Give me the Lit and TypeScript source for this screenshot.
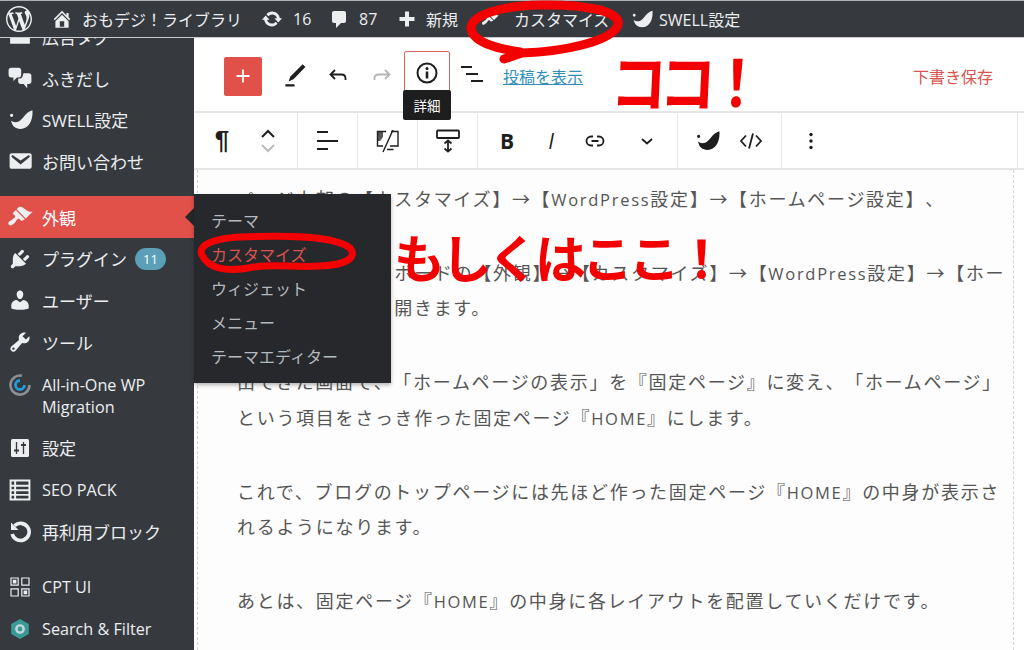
import { LitElement, html, css, svg } from "lit";
import { customElement } from "lit/decorators.js";

const P: Record<string, string> = {
  wp: "M20 10c0-5.51-4.49-10-10-10C4.48 0 0 4.49 0 10c0 5.52 4.48 10 10 10 5.51 0 10-4.48 10-10zM7.78 15.37L4.37 6.22c.55-.02 1.17-.08 1.17-.08.5-.06.44-1.13-.06-1.11 0 0-1.45.11-2.37.11-.18 0-.37 0-.58-.01C4.12 2.69 6.87 1.11 10 1.11c2.33 0 4.45.87 6.05 2.34-.68-.11-1.65.39-1.65 1.58 0 .74.45 1.36.9 2.1.35.61.55 1.36.55 2.46 0 1.49-1.4 5-1.4 5l-3.03-8.37c.54-.02.82-.17.82-.17.5-.05.44-1.25-.06-1.22 0 0-1.44.12-2.38.12-.87 0-2.33-.12-2.33-.12-.5-.03-.56 1.2-.06 1.22l.92.08 1.26 3.41zM17.41 10c.24-.64.74-1.87.43-4.25.7 1.29 1.05 2.71 1.05 4.25 0 3.29-1.73 6.24-4.4 7.78.97-2.59 1.94-5.2 2.92-7.78zM6.1 18.09C3.12 16.65 1.11 13.53 1.11 10c0-1.3.23-2.48.72-3.59C3.25 10.3 4.67 14.2 6.1 18.09zm4.03-6.63l2.58 6.98c-.86.29-1.76.45-2.71.45-.79 0-1.57-.11-2.29-.33.81-2.38 1.62-4.74 2.42-7.1z",
  home: "M16 8.5l1.53 1.53-1.06 1.06L10 4.62l-6.47 6.47-1.06-1.06L10 2.5l4 4v-2h2v4zm-6-2.46l6 5.99V18H4v-5.97zM12 17v-5H8v5h4z",
  update: "M10.2 3.28c3.53 0 6.43 2.61 6.92 6h2.08l-3.5 4-3.5-4h2.32c-.45-1.97-2.21-3.45-4.32-3.45-1.45 0-2.73.71-3.54 1.78L4.95 5.66C6.23 4.2 8.11 3.28 10.2 3.28zm-.4 13.44c-3.52 0-6.43-2.61-6.92-6H.8l3.5-4c1.17 1.33 2.33 2.67 3.5 4H5.48c.45 1.97 2.21 3.45 4.32 3.45 1.45 0 2.73-.71 3.54-1.78l1.71 1.95c-1.28 1.46-3.15 2.38-5.25 2.38z",
  comment: "M5 2h10c1.1 0 2 .9 2 2v8c0 1.1-.9 2-2 2h-3l-5 5v-5H5c-1.1 0-2-.9-2-2V4c0-1.1.9-2 2-2z",
  plus: "M8 2.5h4v5.5h5.5v4H12v5.5H8V12H2.5V8H8z",
  brush: "M14.48 11.06L7.41 3.99l1.5-1.5c.5-.56 2.3-.47 3.51.32 1.21.8 1.43 1.28 2.91 2.1 1.18.64 2.45 1.26 4.45.85zm-.71.71L6.7 4.7 4.93 6.47c-.39.39-.39 1.02 0 1.41l1.06 1.06c.39.39.39 1.03 0 1.42-.6.6-1.43 1.11-2.21 1.69-.35.26-.7.53-1.01.84C1.43 13.23.4 14.8 1.56 15.98c1.17 1.15 2.72.12 4.05-1.21.31-.31.58-.66.84-1.01.58-.78 1.09-1.61 1.69-2.21.39-.39 1.02-.39 1.41 0l1.06 1.06c.39.39 1.02.39 1.41 0z",
  plugin: "M13.11 4.36L9.87 7.6 8 5.73l3.24-3.24c.35-.34 1.05-.2 1.56.32.52.51.66 1.21.31 1.55zm-8 1.77l.91-1.12 9.01 9.01-1.19.84c-.71.71-2.63 1.16-3.82 1.16H6.14L4.9 17.26c-.59.59-1.54.59-2.12 0-.59-.58-.59-1.53 0-2.12l1.24-1.24v-3.88c0-1.13.4-3.19 1.09-3.89zm7.26 3.97l3.24-3.24c.34-.35 1.04-.21 1.55.31.52.51.66 1.21.31 1.55l-3.24 3.25z",
  user: "M10 9.25c-2.27 0-2.73-3.44-2.73-3.44C7 4.02 7.82 2 9.97 2c2.16 0 2.98 2.02 2.71 3.81 0 0-.41 3.44-2.68 3.44zm0 2.57L12.72 10c2.39 0 4.52 2.33 4.52 4.53v2.49s-3.65 1.13-7.24 1.13c-3.65 0-7.24-1.13-7.24-1.13v-2.49c0-2.25 1.94-4.48 4.47-4.48z",
  tools: "M16.68 9.77c-1.34 1.34-3.3 1.67-4.95.99l-5.41 6.52c-.99.99-2.59.99-3.58 0s-.99-2.59 0-3.57l6.52-5.42c-.68-1.65-.35-3.61.99-4.95 1.28-1.28 3.12-1.62 4.72-1.06l-2.89 2.89 2.82 2.82 2.86-2.87c.53 1.58.18 3.39-1.08 4.65zM3.81 16.21c.4.39 1.04.39 1.43 0 .4-.4.4-1.04 0-1.43-.39-.4-1.03-.4-1.43 0-.39.39-.39 1.03 0 1.43z",
  mail: "M3.87 4h13.25C18.37 4 19 4.59 19 5.79v8.42c0 1.19-.63 1.79-1.88 1.79H3.87c-1.25 0-1.88-.6-1.88-1.79V5.79c0-1.2.63-1.79 1.88-1.79zm6.62 8.6l6.74-5.53c.24-.2.43-.66.13-1.07-.29-.41-.82-.42-1.17-.17l-5.7 3.86L4.8 5.83c-.35-.25-.88-.24-1.17.17-.3.41-.11.87.13 1.07z",
  bubbles: "M2.5 1.500h6.500C10.100 1.500 11 2.400 11 3.500v4C11 8.600 10.100 9.500 9 9.500H7.500l-3 3v-3h-2C1.400 9.500.5 8.600.5 7.500v-4C.5 2.400 1.400 1.500 2.500 1.500zM13 6h4.500c1.100 0 2 .9 2 2v5c0 1.100-.9 2-2 2H16v3.500L13 15h-2.500c-1.100 0-2-.9-2-2v-2.500H9c2.200 0 3.500-1.500 3.500-3.500z",
  swell: "M19.500 2.500c.8 7.500-2.500 15-9.500 15-4 0-6.800-2.300-7.500-6.500 1.800 1.300 4 1.500 6 .5 3.800-1.900 5.300-7.500 11-9zM2.900 5.300a1.300 1.300 0 1 1 0 2.600 1.300 1.300 0 0 1 0-2.600z",
  seo: "M2 2h16v16H2zm1.500 1.500v2.500h2V3.500zm3.500 0v2.500h9.500V3.500zm-3.500 4v2h2v-2zm3.500 0v2h9.500v-2zm-3.500 3.500v2h2v-2zm3.500 0v2h9.500v-2zm-3.500 3.500v2h2v-2zm3.500 0v2h9.500v-2z",
  cpt: "M2 2h7v7H2zm1 1v5h5V3zM11 2h7v7h-7zm1 1v5h5V3zM2 11h7v7H2zm1 1v5h5v-5zM11 11h7v7h-7zm1 1v5h5v-5zM4 4h3v3H4zM13 13h3v3h-3z",
  tag: "M1 9L19 3v3.500L6 10.500h13V17H1zM3 1h14v1.500H3z",
};

const icon = (name: string, size = 20) => html`<svg class="ic" width=${size} height=${size} viewBox="0 0 20 20" fill="currentColor" fill-rule="evenodd"><path d=${P[name]}></path></svg>`;
const mi = (inner: unknown) => html`<span class="mi">${inner}</span>`;

const stroke = (body: unknown, size = 24) => html`<svg width=${size} height=${size} viewBox="0 0 24 24" fill="none" stroke="currentColor" stroke-width="1.800">${body}</svg>`;

const reuse = html`<svg class="ic" width="24" height="24" viewBox="0 0 24 24" fill="none" stroke="currentColor" stroke-width="3.600"><path d="M6.500 6.800A8.600 8.600 0 1 1 4.200 15"></path><path d="M3 3.500v7.500h7.500" stroke="none" fill="currentColor"></path></svg>`;
const aio = html`<svg class="ic" width="22" height="22" viewBox="0 0 22 22" fill="none"><path d="M13 1.800A9.500 9.500 0 1 0 20.500 11" stroke="#8b9096" stroke-width="2.600"></path><path d="M15.500 11a4.500 4.500 0 1 1-4.500-4.500" stroke="#1f9bdc" stroke-width="2.800"></path></svg>`;
const search = html`<svg class="ic" width="22" height="22" viewBox="0 0 20 20"><path d="M10 1l8 4.500v9L10 19l-8-4.500v-9z" fill="#3a9a98"></path><circle cx="10" cy="10" r="4.400" fill="#c5d6d8"></circle><circle cx="10" cy="10" r="2.200" fill="#3a9a98"></circle></svg>`;
const sliders = html`<svg class="ic" width="20" height="20" viewBox="0 0 20 20"><rect x="1" y="1" width="18" height="18" rx="1.500" fill="currentColor"></rect><path d="M6.500 4v12M13.500 4v12" stroke="#363a3f" stroke-width="1.300"></path><path d="M4 12.500h5M11 7h5" stroke="#363a3f" stroke-width="2.200"></path></svg>`;

@customElement("app-root")
export class AppRoot extends LitElement {
  static styles = css`
    :host { display: block; width: 1024px; height: 650px; position: relative; overflow: hidden; background: #fff;
      font-family: "Open Sans", "Noto Sans CJK JP", sans-serif; color: #555; }
    .ic { flex: none; display: block; }
    .bar { height: 38px; box-sizing: border-box; border-top: 1px solid #aeb0b2; border-bottom: 1px solid #c9cacb; background: #363a3f; color: #eceeef;
      display: flex; align-items: center; font-size: 16px; position: relative; z-index: 3; white-space: nowrap; }
    .bi { display: flex; align-items: center; }
    .b-wp { margin-left: 6px; width: 45px; }
    .b-site { gap: 9px; width: 210px; }
    .b-count { gap: 10px; width: 68px; }
    .b-new { gap: 9px; width: 84px; }
    .b-cust { gap: 15px; width: 150px; }
    .b-swell { gap: 6px; }
    .body { display: flex; height: 612px; }
    aside { width: 194px; flex: none; background: #363a3f; color: #eceeef; font-size: 17px; position: relative; z-index: 2; }
    ul { list-style: none; margin: 0; padding: 0; }
    .menu { margin-top: -22.500px; }
    .menu > li { height: 41.700px; display: flex; align-items: center; gap: 12px; padding-left: 10px; position: relative; white-space: nowrap; box-sizing: border-box; }
    .mi { width: 20px; flex: none; display: flex; justify-content: center; color: #eceeef; }
    .lat { font-size: 16.200px; }
    .menu > li.gap1 { margin-top: 14px; }
    .menu > li.gap2 { margin-top: 14px; }
    .menu > li.two { height: 64px; line-height: 22px; white-space: normal; align-items: flex-start; padding-top: 11px; }
    .menu > li.active { background: #e2504a; color: #fff; }
    .badge { background: #5b9fb8; color: #fff; border-radius: 11px; font-size: 13px; padding: 2px 8px; margin-left: -4px; line-height: 18px; }
    .fly { position: absolute; left: 194px; top: -2px; width: 197px; box-sizing: border-box; padding: 10px 0 9px; background: #26282b; color: #b4b9be; box-shadow: 0 2px 4px rgba(0,0,0,.3); font-size: 16px; }
    .fly li { height: 34px; line-height: 34px; padding-left: 17px; }
    .fly li.cur { color: #d9534f; }
    .arrow { position: absolute; left: 185px; top: 12px; width: 0; height: 0; border: 9px solid transparent; border-left: 0; border-right-color: #26282b; }
    main { flex: 1; min-width: 0; display: flex; flex-direction: column; }
    .t1 { height: 75px; flex: none; box-sizing: border-box; border-bottom: 2px solid #e6e6e6; display: flex; align-items: center; padding-left: 30px; color: #1e1e1e; position: relative; }
    .add { width: 38px; height: 39px; background: #e2504a; color: #fff; border-radius: 2px; display: flex; align-items: center; justify-content: center; margin-right: 10px; margin-top: 3px; }
    .tb { width: 44px; display: flex; justify-content: center; align-items: center; }
    .tb.off { color: #b5b5b5; }
    .info { width: 46px; height: 44px; box-sizing: border-box; border: 1px solid #d9655e; border-radius: 2px; align-self: flex-start; margin-top: 13px; }
    .tip { position: absolute; left: 209px; top: 52px; width: 48px; height: 30px; background: #1e1e1e; color: #fff; font-size: 13.500px; border-radius: 2px; display: flex; align-items: center; justify-content: center; }
    .view { color: #2f8fb8; text-decoration: underline; font-size: 16px; margin-left: 9px; margin-top: 2px; white-space: nowrap; }
    .draft { color: #d9534f; font-size: 16px; margin-left: auto; margin-right: 31px; white-space: nowrap; margin-top: 2px; }
    .t2 { height: 57px; flex: none; box-sizing: border-box; border-bottom: 2px solid #e6e6e6; display: flex; color: #1e1e1e; }
    .g { display: flex; align-items: center; border-right: 1.500px solid #e6e6e6; box-sizing: border-box; height: 100%; }
    .g1 { width: 104px; padding-left: 6px; }
    .g2, .g3, .g4 { width: 60px; justify-content: center; }
    .g5 { width: 200px; padding-left: 7px; }
    .g6 { width: 104px; padding-left: 7px; }
    .g7 { width: 236px; padding-left: 17px; }
    .cell { width: 44px; display: flex; align-items: center; justify-content: center; flex: none; }
    .c-wide { margin-left: 8px; }
    .mv { flex-direction: column; gap: 6px; margin-left: 2px; }
    .mv .dn { color: #bbb; }
    .bold { font: 700 21px "Open Sans", sans-serif; }
    .ital { font: italic 400 21px "Open Sans", sans-serif; }
    .para { font: 700 26px "Liberation Sans", sans-serif; }
    .edit { flex: 1; min-height: 0; margin: 0 10px 0 3px; border-left: 1px dashed #d5d5d5; border-right: 1px dashed #d5d5d5; padding: 12px 0 0 39px; background: #fdfdfd; overflow: hidden;
      font-size: 18px; letter-spacing: 1.700px; line-height: 35.450px; white-space: nowrap; color: #555; text-spacing-trim: space-all; }
    .edit p { margin: 0 0 38.500px; }
    .en { font-size: 16.500px; }
    .ink { position: absolute; inset: 0; pointer-events: none; z-index: 5; }
    .note { position: absolute; color: #f50000; font-family: "Noto Sans CJK JP", sans-serif; font-weight: 700; white-space: nowrap; z-index: 5; pointer-events: none; }
    .n1 { left: 611px; top: 39px; font-size: 56px; line-height: 80px; letter-spacing: -7px; transform: scaleY(1.150) skewX(-3deg); }
    .n2 { left: 394px; top: 216px; font-size: 51px; line-height: 80px; letter-spacing: -4px; }
  `;

  render() {
    return html`
      <div class="bar">
        <div class="bi b-wp">${icon("wp", 26)}</div>
        <div class="bi b-site">${icon("home", 22)}<span>おもデジ！ライブラリ</span></div>
        <div class="bi b-count">${icon("update", 22)}<span>16</span></div>
        <div class="bi b-count">${icon("comment", 20)}<span>87</span></div>
        <div class="bi b-new">${icon("plus", 20)}<span>新規</span></div>
        <div class="bi b-cust">${icon("brush", 18)}<span>カスタマイズ</span></div>
        <div class="bi b-swell">${icon("swell", 22)}<span>SWELL設定</span></div>
      </div>
      <div class="body">
        <aside>
          <ul class="menu">
            <li>${mi(icon("tag", 22))}<span>広告タグ</span></li>
            <li>${mi(icon("bubbles", 24))}<span>ふきだし</span></li>
            <li>${mi(icon("swell", 25))}<span>SWELL設定</span></li>
            <li>${mi(icon("mail", 26))}<span>お問い合わせ</span></li>
            <li class="gap1 active">${mi(icon("brush", 26))}<span>外観</span>
              <div class="arrow"></div>
              <ul class="fly">
                <li>テーマ</li>
                <li class="cur">カスタマイズ</li>
                <li>ウィジェット</li>
                <li>メニュー</li>
                <li>テーマエディター</li>
              </ul>
            </li>
            <li>${mi(icon("plugin", 24))}<span>プラグイン</span><span class="badge">11</span></li>
            <li>${mi(icon("user", 24))}<span>ユーザー</span></li>
            <li>${mi(icon("tools", 24))}<span>ツール</span></li>
            <li class="two">${mi(aio)}<span class="lat">All-in-One WP<br />Migration</span></li>
            <li>${mi(sliders)}<span>設定</span></li>
            <li>${mi(icon("seo", 26))}<span class="lat">SEO PACK</span></li>
            <li>${mi(reuse)}<span>再利用ブロック</span></li>
            <li class="gap2">${mi(icon("cpt", 24))}<span class="lat">CPT UI</span></li>
            <li>${mi(search)}<span class="lat">Search &amp; Filter</span></li>
          </ul>
        </aside>
        <main>
          <div class="t1">
            <div class="add">${stroke(svg`<path d="M12 5.500v13M5.500 12h13"></path>`, 24)}</div>
            <div class="tb"><svg width="26" height="26" viewBox="0 0 24 24" fill="currentColor"><path d="M20 2l2.500 2.500L11.500 16 7 18l1.500-4.500zM4 20.500h8.500v2.200H4z"></path></svg></div>
            <div class="tb">${stroke(svg`<path d="M9 7L4.500 11.500 9 16M5 11.500h10.500c2.500 0 4 1.700 4 4V17"></path>`)}</div>
            <div class="tb off">${stroke(svg`<path d="M15 7l4.500 4.500L15 16M19 11.500H8.500c-2.500 0-4 1.700-4 4V17"></path>`)}</div>
            <div class="tb info">${stroke(svg`<circle cx="12" cy="12" r="9.500" stroke-width="2"></circle><path d="M12 10.500v7" stroke-width="2.600"></path><circle cx="12" cy="7.500" r="1.500" fill="currentColor" stroke="none"></circle>`, 24)}</div>
            <div class="tb">${stroke(svg`<path d="M1 4h11M6 11h12M11 18h12"></path>`)}</div>
            <a class="view">投稿を表示</a>
            <span class="draft">下書き保存</span>
            <div class="tip">詳細</div>
          </div>
          <div class="t2">
            <div class="g g1">
              <div class="cell para">¶</div>
              <div class="cell mv">
                <svg width="16" height="9" viewBox="0 0 16 9" fill="none" stroke="currentColor" stroke-width="2"><path d="M2 8l6-6 6 6"></path></svg>
                <svg class="dn" width="16" height="9" viewBox="0 0 16 9" fill="none" stroke="currentColor" stroke-width="2"><path d="M2 1l6 6 6-6"></path></svg>
              </div>
            </div>
            <div class="g g2">${stroke(svg`<path d="M1 3h11M1 12h21M1 20h11"></path>`)}</div>
            <div class="g g3"><svg width="24" height="24" viewBox="0 0 24 24" fill="none" stroke="currentColor" stroke-width="1.400"><path d="M1.500 2.500h5.500v5.500L4 12H1.500z" fill="currentColor" fill-opacity=".75" stroke="none"></path><path d="M10 2.500H1.500V17H7M15 2.500h7V17h-8M7 23L17 1M11 20.500h6.500" ></path></svg></div>
            <div class="g g4"><svg width="26" height="26" viewBox="0 0 26 26" fill="none" stroke="currentColor" stroke-width="1.800"><rect x="2" y="2.500" width="22" height="7.500" rx="1"></rect><path d="M13 13v10M9.500 15.500L13 12.500l3.500 3M9.500 20.500L13 23.500l3.500-3"></path></svg></div>
            <div class="g g5">
              <div class="cell bold">B</div>
              <div class="cell ital">I</div>
              <div class="cell">${stroke(svg`<path d="M10 7.500H8a4.500 4.500 0 0 0 0 9h2M14 7.500h2a4.500 4.500 0 0 1 0 9h-2M8.500 12h7"></path>`)}</div>
              <div class="cell c-wide">${stroke(svg`<path d="M7 10l5 4.500 5-4.500"></path>`)}</div>
            </div>
            <div class="g g6">
              <div class="cell">${icon("swell", 25)}</div>
              <div class="cell">${stroke(svg`<path d="M7 6.500L2 12l5 5.500M17 6.500l5 5.500-5 5.500M14 4.500L10 19.500"></path>`)}</div>
            </div>
            <div class="g g7"><svg width="24" height="24" viewBox="0 0 24 24" fill="currentColor"><circle cx="12" cy="5.500" r="1.700"></circle><circle cx="12" cy="12" r="1.700"></circle><circle cx="12" cy="18.500" r="1.700"></circle></svg></div>
          </div>
          <div class="edit">
            <p>ページ上部の【カスタマイズ】→【<span class="en">WordPress</span>設定】→【ホームページ設定】、</p>
            <p>もしくはダッシュボードの【外観】→【カスタマイズ】→【<span class="en">WordPress</span>設定】→【ホー<br />ムページ設定】を開きます。</p>
            <p>出てきた画面で、「ホームページの表示」を『固定ページ』に変え、「ホームページ」<br />という項目をさっき作った固定ページ『<span class="en">HOME</span>』にします。</p>
            <p>これで、ブログのトップページには先ほど作った固定ページ『<span class="en">HOME</span>』の中身が表示さ<br />れるようになります。</p>
            <p>あとは、固定ページ『<span class="en">HOME</span>』の中身に各レイアウトを配置していくだけです。</p>
          </div>
        </main>
      </div>
      <svg class="ink" width="1024" height="650" viewBox="0 0 1024 650" fill="none" stroke="#f50000" stroke-linecap="round" stroke-linejoin="round">
        <path stroke-width="9" d="M504 59 L522 53 C560 52 612 42 618 25 C622 10 580 4 540 5 C500 6 472 15 471 28 C472 42 495 48 520 52"></path>
        <path stroke-width="7" d="M202 255 C197 245 215 238 240 237 C290 235 335 236 350 248 C358 258 345 265 320 266 C295 268 270 263 248 268 C225 272 208 268 202 255Z"></path>
      </svg>
      <div class="note n1">ココ！</div>
      <div class="note n2">もしくはここ！</div>
    `;
  }
}
